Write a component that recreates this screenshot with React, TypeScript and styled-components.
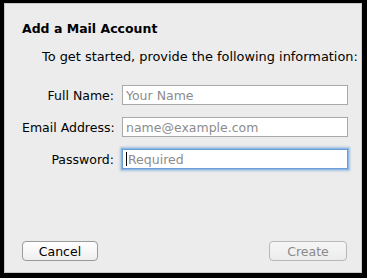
import React from "react";
import styled, { createGlobalStyle } from "styled-components";

const Global = createGlobalStyle`
  html, body { margin: 0; padding: 0; background: #000; }
  body { font-family: "DejaVu Sans", "Liberation Sans", sans-serif; }
`;

const Panel = styled.div`
  box-sizing: border-box;
  margin: 3px 0 0 4px;
  width: 358px;
  height: 270px;
  background: #ececec;
  border: 1px solid #c9c9c9;
  display: flex;
  flex-direction: column;
  padding: 17px 14px 11px 17px;
  color: #000;
`;

const Title = styled.div`
  font-size: 12.5px;
  font-weight: bold;
  line-height: 16px;
`;

const Intro = styled.div`
  font-size: 12.9px;
  line-height: 16px;
  margin: 12px 0 0 20px;
  white-space: nowrap;
`;

const Form = styled.div`
  display: grid;
  grid-template-columns: 92px 226px;
  column-gap: 8px;
  row-gap: 12px;
  margin-top: 20px;
  align-items: center;
`;

const Label = styled.label`
  font-size: 12.5px;
  text-align: right;
  white-space: nowrap;
`;

const Field = styled.div<{ $focused?: boolean }>`
  box-sizing: border-box;
  height: 20px;
  background: #fff;
  border: 1px solid ${(p) => (p.$focused ? "#6d9ed6" : "#a9a9a9")};
  box-shadow: ${(p) =>
    p.$focused ? "0 0 0 1px #8db6e4, 0 0 2px 2px rgba(109,158,214,0.55)" : "none"};
  display: flex;
  align-items: center;
  padding-left: 3px;
  font-size: 12.5px;
  color: #8c8c8c;
  white-space: nowrap;
`;

const Caret = styled.span`
  display: inline-block;
  width: 1px;
  height: 14px;
  background: #000;
  margin-right: 1px;
`;

const Footer = styled.div`
  margin-top: auto;
  display: flex;
  justify-content: space-between;
`;

const Button = styled.div<{ $disabled?: boolean }>`
  box-sizing: border-box;
  height: 20px;
  border: 1px solid ${(p) => (p.$disabled ? "#b8b8b8" : "#9a9a9a")};
  border-radius: 4px;
  background: ${(p) =>
    p.$disabled ? "linear-gradient(#f6f6f6, #ececec)" : "linear-gradient(#ffffff, #efefef)"};
  font-size: 12.5px;
  color: ${(p) => (p.$disabled ? "#8a8a8a" : "#000")};
  display: flex;
  align-items: center;
  justify-content: center;
`;

const CancelButton = styled(Button)`
  width: 76px;
`;

const CreateButton = styled(Button)`
  width: 78px;
`;

export default function App() {
  return (
    <>
      <Global />
      <Panel>
        <Title>Add a Mail Account</Title>
        <Intro>To get started, provide the following information:</Intro>
        <Form>
          <Label>Full Name:</Label>
          <Field>Your Name</Field>
          <Label>Email Address:</Label>
          <Field>name@example.com</Field>
          <Label>Password:</Label>
          <Field $focused>
            <Caret />
            Required
          </Field>
        </Form>
        <Footer>
          <CancelButton>Cancel</CancelButton>
          <CreateButton $disabled>Create</CreateButton>
        </Footer>
      </Panel>
    </>
  );
}
